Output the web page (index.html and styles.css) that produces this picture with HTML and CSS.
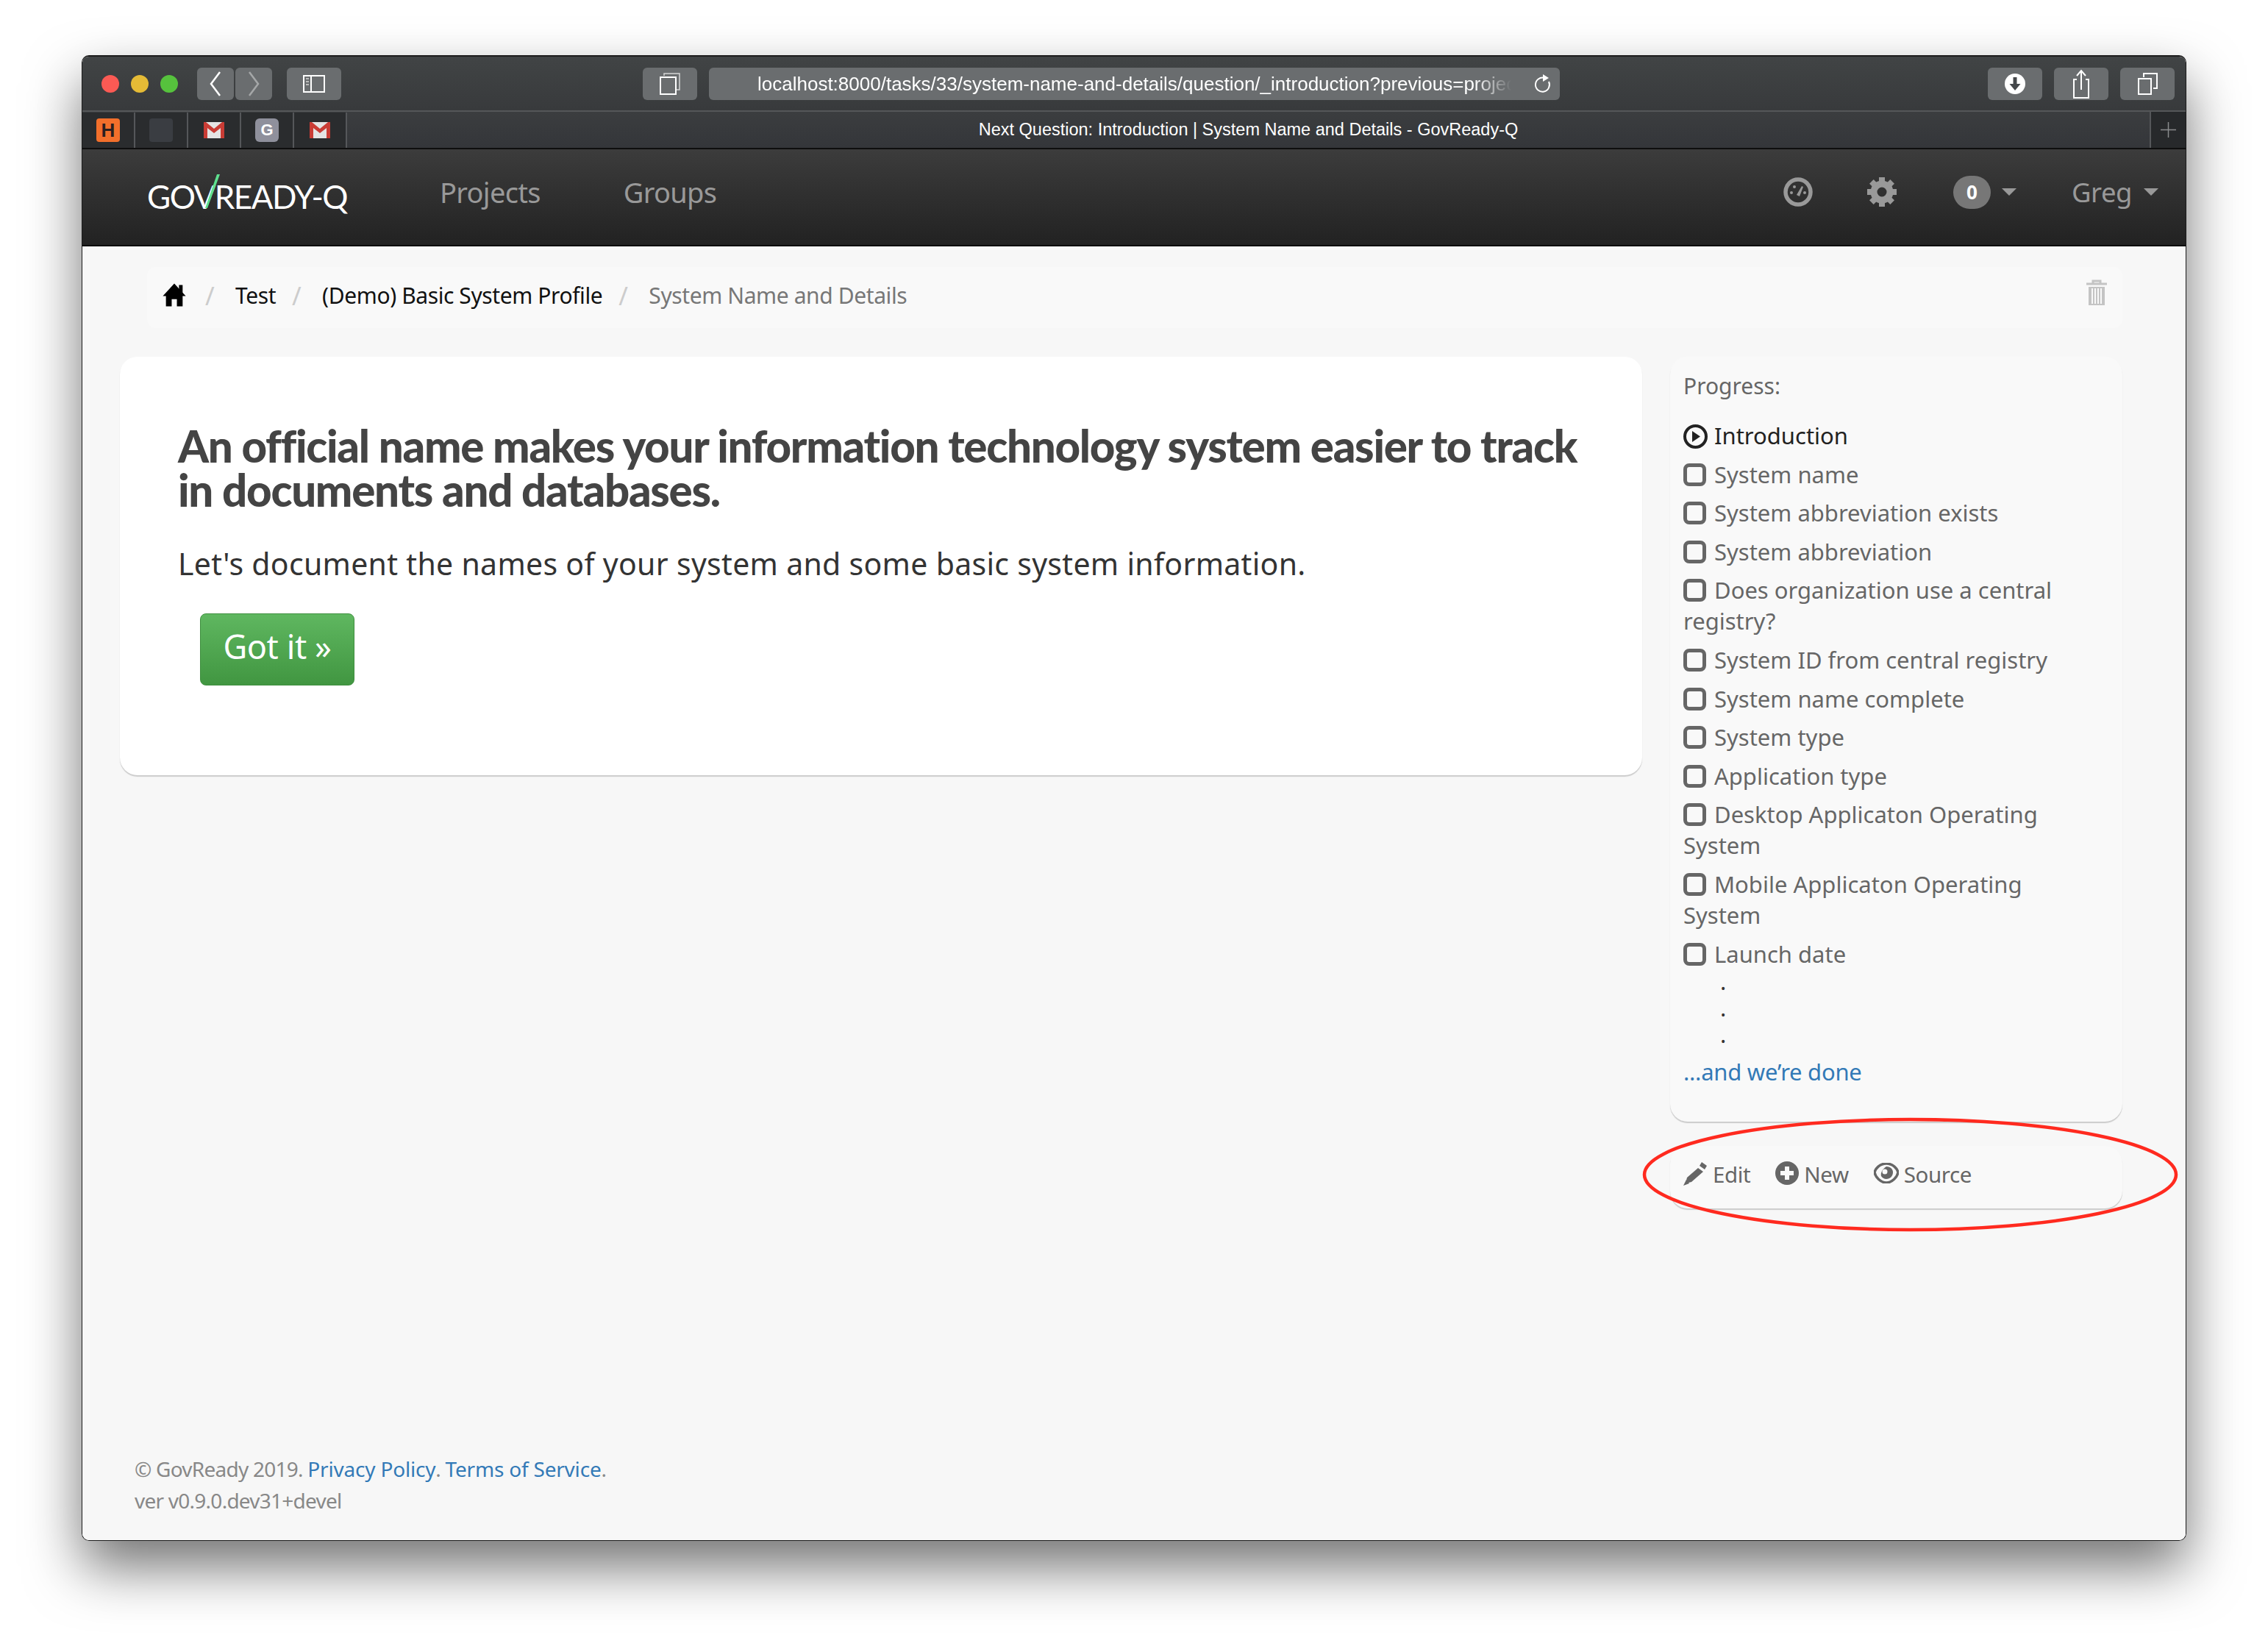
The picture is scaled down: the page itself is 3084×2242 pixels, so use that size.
FILE: index.html
```html
<!DOCTYPE html>
<html lang="en">

<head>
    <meta charset="UTF-8">
    <title>Next Question: Introduction | System Name and Details - GovReady-Q</title>
    <link rel="stylesheet" href="styles.css">
</head>

<body>
    <div class="window">
        <div class="toolbar">
            <div class="lights">
                <span class="light red"></span>
                <span class="light yellow"></span>
                <span class="light green"></span>
            </div>
            <div class="nav-pair">
                <span class="tool tool-arrow"><svg width="20" height="36" viewBox="0 0 20 36"><path d="M16 2L4 18l12 16" fill="none" stroke="#fff" stroke-width="2.5"/></svg></span>
                <span class="tool tool-arrow"><svg width="20" height="36" viewBox="0 0 20 36"><path d="M4 2l12 16L4 34" fill="none" stroke="#a5a7a8" stroke-width="2.5"/></svg></span>
            </div>
            <span class="tool tool-wide sidebar-btn"><svg width="30" height="24" viewBox="0 0 30 24"><path d="M1 1h28v22H1zM11 1v22" fill="none" stroke="#fff" stroke-width="2"/><path d="M4 5h4M4 9h4M4 13h4" stroke="#bbb" stroke-width="2"/></svg></span>
            <span class="tool tool-wide tabs-btn"><svg width="30" height="30" viewBox="0 0 30 30"><path d="M7 4V1h21v22h-4" fill="none" stroke="#d5d5d5" stroke-width="1.5"/><path d="M2 6h21v23H2z" fill="none" stroke="#fff" stroke-width="2"/></svg></span>
            <div class="url-bar">
                <span class="url-text">localhost:8000/tasks/33/system-name-and-details/question/_introduction?previous=projec</span>
                <svg class="reload" width="26" height="28" viewBox="0 0 26 28"><path d="M21 11a9.500 9.500 0 1 1-6-5" fill="none" stroke="#fff" stroke-width="2"/><path d="M13 1l8 5-8 5z" fill="#fff"/></svg>
            </div>
            <div class="right-tools">
                <span class="tool tool-wide"><svg width="28" height="28" viewBox="0 0 28 28"><circle cx="14" cy="14" r="14" fill="#fff"/><path d="M11.500 5h5v9h5L14 23 6.500 14h5z" fill="#44474a"/></svg></span>
                <span class="tool tool-wide"><svg width="26" height="40" viewBox="0 0 26 40"><path d="M7 14H3v25h20V14h-4" fill="none" stroke="#fff" stroke-width="2"/><path d="M13 28V3M7 9l6-7 6 7" fill="none" stroke="#fff" stroke-width="2"/></svg></span>
                <span class="tool tool-wide"><svg width="28" height="30" viewBox="0 0 28 30"><path d="M9 6V1h18v20h-5" fill="none" stroke="#fff" stroke-width="2"/><path d="M2 8h17v21H2z" fill="none" stroke="#fff" stroke-width="2"/></svg></span>
            </div>
        </div>

        <div class="tabbar">
            <div class="fav"><span class="fav-h">H</span></div>
            <div class="fav"><span class="fav-blank"></span></div>
            <div class="fav"><svg width="28" height="22" viewBox="0 0 28 22"><path d="M0 0h28v22H0z" fill="#e4e4e4"/><path d="M0 0h3l11 9L25 0h3v22h-5V8l-9 7-9-7v14H0z" fill="#c93c35"/></svg></div>
            <div class="fav"><span class="fav-g">G</span></div>
            <div class="fav"><svg width="28" height="22" viewBox="0 0 28 22"><path d="M0 0h28v22H0z" fill="#e4e4e4"/><path d="M0 0h3l11 9L25 0h3v22h-5V8l-9 7-9-7v14H0z" fill="#c93c35"/></svg></div>
            <div class="tab-title">Next Question: Introduction | System Name and Details - GovReady-Q</div>
            <div class="tab-plus"><svg width="21" height="21" viewBox="0 0 21 21"><path d="M10.500 0v21M0 10.500h21" stroke="#8a8c8d" stroke-width="1.500"/></svg></div>
        </div>

        <nav class="site-nav">
            <a class="logo">GOVREADY-Q<svg class="logo-check" width="24" height="46" viewBox="0 0 24 46"><path d="M19 0h4L6 46H3z" fill="#5ee08f"/></svg></a>
            <a class="nav-link first">Projects</a>
            <a class="nav-link">Groups</a>
            <div class="nav-right">
                <svg class="nav-dash" width="40" height="40" viewBox="0 0 40 40"><circle cx="20" cy="20" r="17" fill="none" stroke="#999" stroke-width="5.500"/><path d="M18 24l7-12 2 1-5 13z" fill="#999"/><circle cx="11" cy="21" r="2" fill="#999"/><circle cx="15" cy="13" r="2" fill="#999"/><circle cx="29" cy="21" r="2" fill="#999"/></svg>
                <svg class="nav-cog" width="40" height="40" viewBox="0 0 40 40"><circle cx="20" cy="20" r="11" fill="none" stroke="#999" stroke-width="9"/><g fill="#999"><rect x="16" y="0" width="8" height="9"/><rect x="16" y="31" width="8" height="9"/><rect x="0" y="16" width="9" height="8"/><rect x="31" y="16" width="9" height="8"/><rect x="16" y="0" width="8" height="9" transform="rotate(45 20 20)"/><rect x="16" y="31" width="8" height="9" transform="rotate(45 20 20)"/><rect x="0" y="16" width="9" height="8" transform="rotate(45 20 20)"/><rect x="31" y="16" width="9" height="8" transform="rotate(45 20 20)"/></g></svg>
                <span class="badge">0</span>
                <span class="caret caret-badge"></span>
                <a class="nav-user">Greg</a>
                <span class="caret"></span>
            </div>
        </nav>

        <div class="page">
            <div class="crumbs">
                <svg class="crumb-home" width="34" height="34" viewBox="0 0 24 24"><path d="M12 1l11 12h-3v10h-5.500v-7h-5v7H4V13H1z"/><path d="M16.500 2.500H20v8l-3.500-3.500z"/></svg>
                <span class="crumb-sep">/</span>
                <a class="crumb">Test</a>
                <span class="crumb-sep">/</span>
                <a class="crumb">(Demo) Basic System Profile</a>
                <span class="crumb-sep">/</span>
                <span class="crumb-last">System Name and Details</span>
                <svg class="crumb-trash" width="30" height="36" viewBox="0 0 30 36"><path d="M10 5V2h10v3M1 6h28" fill="none" stroke="#c4c4c4" stroke-width="3"/><path d="M4 10h22v25H4z" fill="#c4c4c4"/><path d="M9 12v21M13 12v21M17 12v21M21 12v21" stroke="#f9f9f9" stroke-width="2"/></svg>
            </div>

            <div class="columns">
                <section class="question">
                    <h1>An official name makes your information technology system easier to track in documents and databases.</h1>
                    <p>Let's document the names of your system and some basic system information.</p>
                    <button class="got-it">Got it »</button>
                </section>

                <aside class="side">
                    <div class="panel progress">
                        <p class="progress-title">Progress:</p>
                        <ul>
                            <li class="current"><svg class="ico-play" width="33" height="33" viewBox="0 0 33 33"><circle cx="16.500" cy="16.500" r="14.500" fill="none" stroke="#222" stroke-width="4"/><path d="M12 9l11 7.500L12 24z" fill="#222"/></svg>Introduction</li>
                            <li><span class="box"></span>System name</li>
                            <li><span class="box"></span>System abbreviation exists</li>
                            <li><span class="box"></span>System abbreviation</li>
                            <li><span class="box"></span>Does organization use a central registry?</li>
                            <li><span class="box"></span>System ID from central registry</li>
                            <li><span class="box"></span>System name complete</li>
                            <li><span class="box"></span>System type</li>
                            <li><span class="box"></span>Application type</li>
                            <li><span class="box"></span>Desktop Applicaton Operating System</li>
                            <li><span class="box"></span>Mobile Applicaton Operating System</li>
                            <li><span class="box"></span>Launch date</li>
                        </ul>
                        <div class="dots">
                            <span>.</span>
                            <span>.</span>
                            <span>.</span>
                        </div>
                        <a class="done">...and we’re done</a>
                    </div>

                    <div class="panel actions">
                        <a class="action"><svg class="ico-pencil" width="33" height="33" viewBox="0 0 33 33"><path d="M25 1l7 5-3 5-7-5zM20 9l7 5L11 28l-8 2 2-8z" fill="#666"/><path d="M0 33l4-8 4 5z" fill="#666"/></svg>Edit</a>
                        <a class="action"><svg class="ico-plus" width="32" height="32" viewBox="0 0 32 32"><circle cx="16" cy="16" r="16" fill="#666"/><path d="M13 7h6v6h6v6h-6v6h-6v-6H7v-6h6z" fill="#f9f9f9"/></svg>New</a>
                        <a class="action"><svg class="ico-eye" width="34" height="28" viewBox="0 0 34 28"><path d="M17 1C8 1 2 8 1 13c1 6 8 14 16 14s15-8 16-14C32 8 26 1 17 1z" fill="none" stroke="#666" stroke-width="3.500"/><path d="M17 5c6 0 9 4 9 8 0 5-4 9-9 9-3 0-6-2-7-4-1-4 1-9 7-13z" fill="#666"/><circle cx="15" cy="12" r="3.500" fill="#f9f9f9"/></svg>Source</a>
                    </div>
                </aside>
            </div>

            <footer class="foot">
                <div>© GovReady 2019. <a>Privacy Policy</a>. <a>Terms of Service</a>.</div>
                <div>ver v0.9.0.dev31+devel</div>
            </footer>
        </div>

        <svg class="red-ring" width="730" height="156" viewBox="0 0 730 156"><ellipse cx="364.500" cy="78" rx="361.500" ry="75" fill="none" stroke="#ff2a1f" stroke-width="4.500"/></svg>
    </div>
</body>

</html>
```

FILE: styles.css
```css
* {
    padding: 0;
    margin: 0;
    box-sizing: border-box;
}

body {
    background-color: #fff;
    font-family: "Noto Sans", sans-serif;
    overflow: hidden;
    height: 2242px;
}

.window {
    position: relative;
    margin: 75px 0 0 111px;
    width: 2862px;
    height: 2020px;
    display: flex;
    flex-direction: column;
    border: 1px solid #1c1c1c;
    border-top-width: 2px;
    border-radius: 10px;
    overflow: hidden;
}

/* the shadow has to sit outside the clipped box */
body::before {
    content: "";
    position: absolute;
    left: 111px;
    top: 75px;
    width: 2862px;
    height: 2020px;
    border-radius: 10px;
    box-shadow: 0 36px 74px rgba(0, 0, 0, 0.55);
}

/* browser chrome */
.toolbar {
    height: 75px;
    flex: none;
    display: flex;
    align-items: flex-start;
    padding-top: 15px;
    background: linear-gradient(#414445, #383a3c);
    border-bottom: 2px solid #555759;
}

.lights {
    display: flex;
    gap: 16px;
    margin: 10px 0 0 26px;
}

.light {
    width: 24px;
    height: 24px;
    border-radius: 50%;
}

.red {
    background-color: #fb5a54;
}

.yellow {
    background-color: #e5bb36;
}

.green {
    background-color: #56c23d;
}

.tool {
    display: flex;
    align-items: center;
    justify-content: center;
    height: 44px;
    background-color: #6a6d6f;
    border-radius: 6px;
}

.tool-arrow {
    width: 50px;
}

.tool-wide {
    width: 74px;
}

.nav-pair {
    display: flex;
    gap: 2px;
    margin-left: 26px;
}

.sidebar-btn {
    margin-left: 20px;
}

.tabs-btn {
    margin-left: 410px;
}

.url-bar {
    display: flex;
    align-items: center;
    position: relative;
    width: 1157px;
    height: 44px;
    margin-left: 16px;
    padding-left: 66px;
    background-color: #6a6d6f;
    border-radius: 6px;
}

.url-text {
    width: 1036px;
    flex: none;
    white-space: nowrap;
    font-family: "Liberation Sans", sans-serif;
    font-size: 26px;
    color: #fff;
    -webkit-mask-image: linear-gradient(to right, #000 94%, transparent 99%);
    mask-image: linear-gradient(to right, #000 94%, transparent 99%);
}

.reload {
    margin-left: 19px;
}

.right-tools {
    display: flex;
    gap: 16px;
    margin-left: 582px;
}

.tabbar {
    height: 51px;
    flex: none;
    display: flex;
    background: linear-gradient(#3b3d3f, #34363a);
    border-bottom: 2px solid #0e0e0e;
}

.fav {
    width: 72px;
    flex: none;
    display: flex;
    align-items: center;
    justify-content: center;
    background-color: #2a2c2e;
    border-right: 2px solid #55575a;
    margin-top: 1px;
}

.fav-h {
    width: 32px;
    height: 32px;
    border-radius: 4px;
    background-color: #f26f2b;
    color: #2a2020;
    font-family: "Liberation Sans", sans-serif;
    font-weight: bold;
    font-size: 26px;
    line-height: 32px;
    text-align: center;
}

.fav-blank {
    width: 32px;
    height: 32px;
    border-radius: 4px;
    background-color: #3a3d42;
}

.fav-g {
    width: 32px;
    height: 32px;
    border-radius: 6px;
    background-color: #8f909c;
    color: #fff;
    font-family: "Liberation Sans", sans-serif;
    font-weight: bold;
    font-size: 22px;
    line-height: 32px;
    text-align: center;
}

.tab-title {
    flex: 1;
    text-align: center;
    font-family: "Liberation Sans", sans-serif;
    font-size: 23.5px;
    line-height: 49px;
    color: #fff;
}

.tab-plus {
    width: 49px;
    flex: none;
    display: flex;
    align-items: center;
    justify-content: center;
    background-color: #27292b;
    border-left: 2px solid #55575a;
}

/* site navbar */
.site-nav {
    height: 132px;
    flex: none;
    display: flex;
    align-items: center;
    padding-left: 88px;
    background: linear-gradient(#3c3c3c, #222);
    border-bottom: 2px solid #080808;
}

.logo {
    position: relative;
    width: 275px;
    font-family: "Lato", sans-serif;
    font-size: 44px;
    letter-spacing: -1.5px;
    line-height: 50px;
    color: #fff;
    white-space: nowrap;
    margin-top: -2px;
}

.logo-check {
    position: absolute;
    left: 76px;
    top: -5px;
}

.nav-link {
    font-size: 38px;
    letter-spacing: -0.7px;
    color: #999;
    margin-left: 113px;
    margin-top: -14px;
}

.nav-link.first {
    margin-left: 123px;
}

.nav-right {
    display: flex;
    align-items: center;
    margin-left: auto;
    margin-top: -14px;
    padding-right: 37px;
}

.nav-cog {
    margin-left: 74px;
}

.badge {
    width: 51px;
    height: 45px;
    margin-left: 77px;
    border-radius: 23px;
    background-color: #777;
    color: #fff;
    font-size: 26px;
    font-weight: bold;
    line-height: 45px;
    text-align: center;
}

.caret {
    width: 0;
    height: 0;
    border-left: 10px solid transparent;
    border-right: 10px solid transparent;
    border-top: 10px solid #999;
}

.caret-badge {
    margin-left: 15px;
}

.nav-user {
    font-size: 36.5px;
    letter-spacing: -0.5px;
    color: #999;
    margin: 0 16px 0 75px;
}

/* page body */
.page {
    flex: 1;
    display: flex;
    flex-direction: column;
    background-color: #f7f7f7;
}

.crumbs {
    display: flex;
    align-items: center;
    height: 83px;
    margin: 28px 86px 0 88px;
    padding: 0 0 6px 20px;
    background-color: #f9f9f9;
    border-radius: 12px;
    font-size: 30px;
    letter-spacing: -0.4px;
}

.crumb-home {
    margin: -2px 3px 0 0;
}

.crumb-sep {
    width: 14px;
    margin: 0 28px 0 21px;
    font-size: 34px;
    text-align: center;
    color: #ccc;
}

.crumb {
    color: #111;
}

.crumb-last {
    color: #777;
}

.crumb-trash {
    margin: 0 20px 7px auto;
}

.columns {
    display: flex;
    align-items: flex-start;
    gap: 38px;
    margin: 39px 86px 0 51px;
}

.question {
    flex: 1;
    height: 569px;
    padding: 91px 40px 0 79px;
    background-color: #fff;
    border-radius: 24px;
    box-shadow: 0 2px 1px #ccc;
}

.question h1 {
    font-family: "Lato", sans-serif;
    font-size: 60px;
    font-weight: 900;
    line-height: 60px;
    letter-spacing: -1.28px;
    color: #444;
}

.question p {
    margin-top: 40px;
    font-size: 41px;
    line-height: 60px;
    letter-spacing: 0.3px;
    color: #333;
}

.got-it {
    display: block;
    width: 210px;
    height: 98px;
    margin: 38px 0 0 30px;
    padding-bottom: 10px;
    border: 1px solid #3f8f3f;
    border-radius: 8px;
    background: linear-gradient(#5fb760, #419641);
    font-family: "Noto Sans", sans-serif;
    font-size: 45px;
    letter-spacing: -0.4px;
    color: #fff;
}

.side {
    width: 615px;
    flex: none;
}

.panel {
    background-color: #f9f9f9;
    border-radius: 24px;
    box-shadow: 0 2px 1px #ccc;
}

.progress {
    height: 1040px;
    padding: 19px 40px 0 18px;
    font-size: 31px;
    line-height: 42px;
    color: #666;
}

.progress-title {
    margin-bottom: 25px;
    font-size: 30px;
}

.progress ul {
    list-style: none;
}

.progress li {
    margin-bottom: 10.6px;
}

.current {
    color: #222;
}

.ico-play {
    vertical-align: -6px;
    margin-right: 9px;
}

.box {
    display: inline-block;
    width: 31px;
    height: 31px;
    margin-right: 11px;
    vertical-align: -4px;
    border: 5px solid #666;
    border-radius: 8px;
}

.dots {
    display: flex;
    flex-direction: column;
    padding-left: 50px;
    margin-top: -12px;
    color: #333;
    line-height: 36px;
}

.done {
    display: block;
    margin-top: 12px;
    letter-spacing: -0.25px;
    color: #337ab7;
}

.actions {
    display: flex;
    height: 85px;
    margin-top: 33px;
    padding: 17px 0 0 18px;
    gap: 34px;
    font-size: 29.5px;
    letter-spacing: -0.4px;
    color: #666;
}

.action {
    display: flex;
    align-items: flex-start;
    gap: 7px;
    line-height: 44px;
}

.action svg {
    margin-top: 4px;
}

.action .ico-eye {
    margin-top: 6px;
}

.foot {
    margin-top: auto;
    padding: 0 0 32px 71px;
    font-size: 28px;
    line-height: 43px;
    letter-spacing: -0.75px;
    color: #888;
}

.foot a {
    color: #337ab7;
    letter-spacing: -0.2px;
}

/* annotation drawn on top of the screenshot */
.red-ring {
    position: absolute;
    left: 2121px;
    top: 1442px;
}
```
